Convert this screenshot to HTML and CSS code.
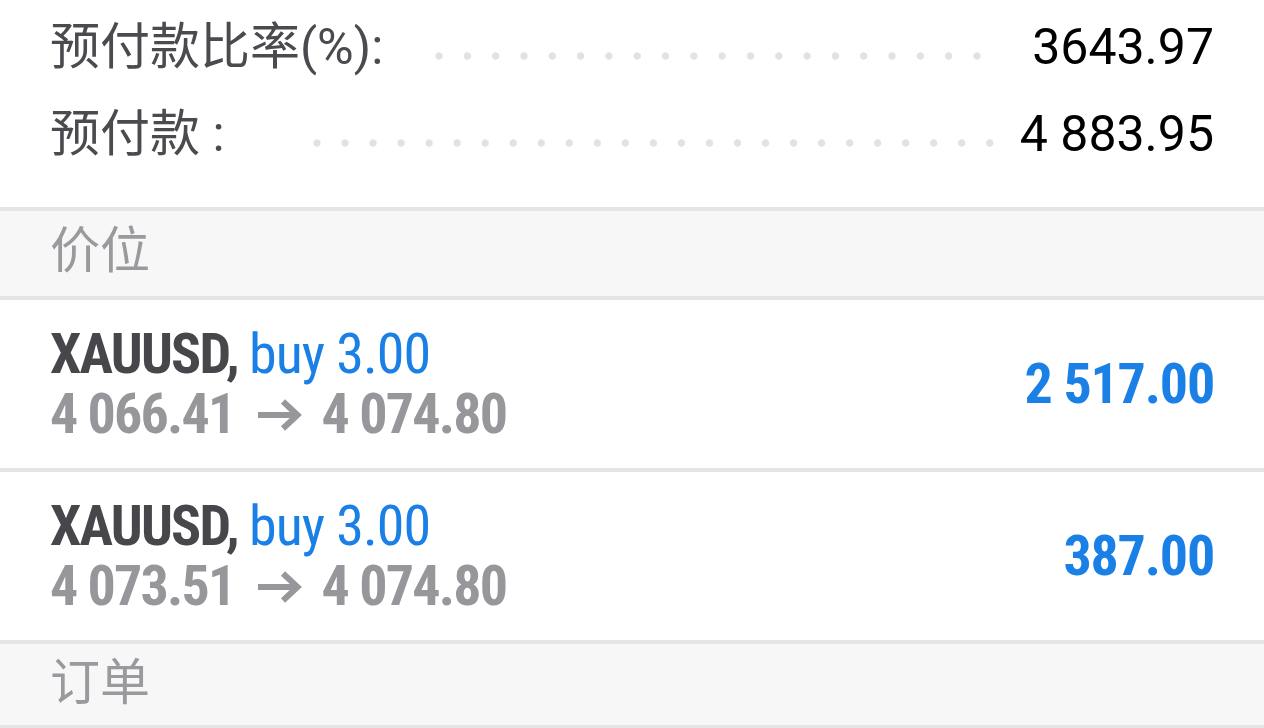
FILE: index.html
```html
<!DOCTYPE html>
<html lang="zh-CN">
<head>
<meta charset="utf-8">
<title>交易</title>
<link rel="stylesheet" href="styles.css">
</head>
<body>
<main class="screen">
  <section class="summary">
    <div class="stat">
      <span class="stat-label">预付款比率(%):</span>
      <span class="leader leader--ratio"></span>
      <span class="stat-value">3643.97</span>
    </div>
    <div class="stat">
      <span class="stat-label">预付款 :</span>
      <span class="leader leader--margin"></span>
      <span class="stat-value">4 883.95</span>
    </div>
  </section>

  <div class="section-title">价位</div>

  <div class="position">
    <div class="position-info">
      <div class="position-head"><span class="symbol">XAUUSD,</span> <span class="deal">buy 3.00</span></div>
      <div class="position-prices">
        <span>4 066.41</span>
        <svg class="arrow" viewBox="0 0 44 34" aria-hidden="true"><path d="M0 17H39M25 3.5L39.5 17L25 30.5"/></svg>
        <span>4 074.80</span>
      </div>
    </div>
    <div class="profit">2 517.00</div>
  </div>

  <div class="position">
    <div class="position-info">
      <div class="position-head"><span class="symbol">XAUUSD,</span> <span class="deal">buy 3.00</span></div>
      <div class="position-prices">
        <span>4 073.51</span>
        <svg class="arrow" viewBox="0 0 44 34" aria-hidden="true"><path d="M0 17H39M25 3.5L39.5 17L25 30.5"/></svg>
        <span>4 074.80</span>
      </div>
    </div>
    <div class="profit">387.00</div>
  </div>

  <div class="section-title section-title--last">订单</div>
</main>
</body>
</html>
```
FILE: styles.css
```css
* { box-sizing: border-box; }

html, body {
  margin: 0;
  padding: 0;
  background: #ffffff;
}

body {
  font-family: Roboto, "Noto Sans CJK SC", sans-serif;
  overflow: hidden;
}

.screen {
  width: 1264px;
}

/* ---- summary ---- */
.summary {
  height: 207px;
  padding: 4px 50px 0 50px;
}

.stat {
  display: flex;
  align-items: center;
  height: 87px;
  font-size: 50px;
  line-height: 87px;
}

.stat-label {
  color: #4a4a4f;
  white-space: nowrap;
}

.stat-value {
  color: #000000;
  white-space: nowrap;
}

.leader {
  flex: 1;
  align-self: center;
  height: 8px;
  margin-top: 16px;
  background-image: radial-gradient(circle at center, #e2e2e2 3.4px, rgba(226,226,226,0) 4px);
  background-size: 28px 8px;
  background-repeat: space no-repeat;
}

.leader--ratio {
  margin-left: 42px;
  margin-right: 41px;
}

.leader--margin {
  margin-left: 78px;
  margin-right: 16px;
}

/* ---- section titles ---- */
.section-title {
  display: flex;
  align-items: center;
  height: 89px;
  padding: 0 50px 16px 50px;
  border-top: 4px solid #e5e5e5;
  background: #f7f7f7;
  color: #9a9a9e;
  font-family: "Noto Sans CJK SC", Roboto, sans-serif;
  font-size: 50px;
}

.section-title--last {
  padding-bottom: 14px;
  border-bottom: 4px solid #e5e5e5;
}

/* ---- positions ---- */
.position {
  display: flex;
  align-items: center;
  justify-content: space-between;
  height: 172px;
  padding: 0 50px;
  border-top: 4px solid #e5e5e5;
  font-family: "Roboto Condensed", Roboto, sans-serif;
  font-size: 56px;
  letter-spacing: -1.8px;
}

.position-info {
  display: flex;
  flex-direction: column;
}

.position-head {
  line-height: 60px;
  white-space: nowrap;
}

.symbol {
  color: #46464b;
  font-weight: 700;
}

.deal {
  color: #1a80e6;
  font-weight: 400;
  letter-spacing: -0.9px;
}

.position-prices {
  display: flex;
  align-items: center;
  height: 60px;
  color: #97979b;
  font-weight: 700;
  white-space: nowrap;
}

.arrow {
  width: 44px;
  height: 34px;
  margin: 2px 20px 0 23px;
  fill: none;
  stroke: #97979b;
  stroke-width: 6;
  stroke-linejoin: miter;
}

.profit {
  color: #1a80e6;
  font-weight: 700;
  letter-spacing: -1.2px;
  white-space: nowrap;
}
```
